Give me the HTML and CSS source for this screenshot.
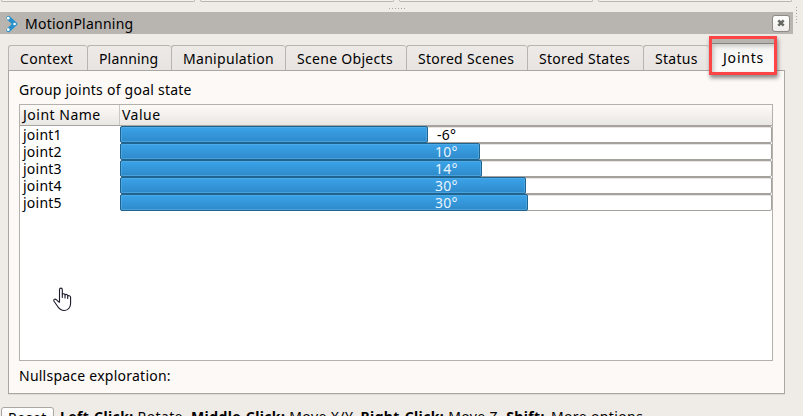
FILE: index.html
```html
<!DOCTYPE html>
<html lang="en">
<head>
<meta charset="utf-8">
<title>MotionPlanning</title>
<link rel="stylesheet" href="styles.css">
</head>
<body>
<div class="top"><i></i><i></i><i></i><i></i></div>
<div class="grip"></div>
<div class="side-grip"></div>
<header class="title">
  <svg class="logo" width="12" height="18" viewBox="0 0 12 18"><path d="M2.5 3 9 9 2.5 15" fill="none" stroke="#2790cc" stroke-width="4.4" stroke-linecap="round" stroke-linejoin="round"/><g fill="#fff"><circle cx="2.2" cy="3.2" r="1.4"/><circle cx="8.6" cy="9" r="1.3"/><circle cx="2.2" cy="14.7" r="1.4"/></g></svg>
  <span class="t-title">MotionPlanning</span>
  <button class="close" aria-label="Close"><svg width="8" height="8" viewBox="0 0 8 8"><path d="M1.3 1.3 6.7 6.7M6.7 1.3 1.3 6.7" stroke="#666662" stroke-width="2.5"/></svg></button>
</header>
<nav class="tabs">
  <div class="tab w1"><span>Context</span></div>
  <div class="tab w2"><span>Planning</span></div>
  <div class="tab w3"><span>Manipulation</span></div>
  <div class="tab w4"><span>Scene Objects</span></div>
  <div class="tab w5"><span>Stored Scenes</span></div>
  <div class="tab w6"><span>Stored States</span></div>
  <div class="tab w7"><span>Status</span></div>
  <div class="marker"><div class="active"><span>Joints</span></div></div>
</nav>
<main class="pane">
  <div class="label"><span class="t-group">Group joints of goal state</span></div>
  <section class="table">
    <div class="head"><div class="name"><span class="t-name">Joint Name</span></div><div class="value"><span class="t-value">Value</span></div></div>
    <div class="row"><div class="name"><span>joint1</span></div><div class="bar"><div class="fill" style="width:308px"></div><span class="num dark">-6°</span></div></div>
    <div class="row"><div class="name"><span>joint2</span></div><div class="bar"><div class="fill" style="width:360px"></div><span class="num">10°</span></div></div>
    <div class="row"><div class="name"><span>joint3</span></div><div class="bar"><div class="fill" style="width:362px"></div><span class="num">14°</span></div></div>
    <div class="row"><div class="name"><span>joint4</span></div><div class="bar"><div class="fill" style="width:406px"></div><span class="num">30°</span></div></div>
    <div class="row"><div class="name"><span>joint5</span></div><div class="bar"><div class="fill" style="width:408px"></div><span class="num">30°</span></div></div>
  </section>
  <div class="label bottom"><span class="t-null">Nullspace exploration:</span></div>
</main>
<footer class="help">
  <button class="reset">Reset</button>
  <p><b>Left-Click:</b> Rotate. <b>Middle-Click:</b> Move X/Y. <b>Right-Click:</b> Move Z. <b>Shift:</b> <span class="more">More options.</span></p>
</footer>
<svg class="cursor" width="20" height="26" viewBox="0 0 20 26"><path d="M6.5 15.5V2.8C6.5.6 9.3.6 9.3 2.8V10.5 7.8C9.3 6.2 12 6.4 12 8V11 8.3C12.3 6.9 14.7 7.2 14.7 8.8V11.5 9.5C15 8.2 17.6 8.5 17.6 10.2V16C17.6 19.5 15.8 23.5 11.5 23.5 7.3 23.5 5.7 21.5 4 18.5L1 14.2C0 12.5 2 11.5 3.3 12.7L6.5 15.7" fill="#fff" stroke="#1c1a2b" stroke-width="1.1" stroke-linejoin="round"/></svg>
</body>
</html>
```
FILE: styles.css
```css
* { box-sizing: border-box; }
body {
  margin: 0;
  width: 803px;
  height: 416px;
  overflow: hidden;
  position: relative;
  background: #efebe7;
  color: #000;
  font: 14px/20px "Noto Sans", "Open Sans", sans-serif;
  letter-spacing: .24px;
  white-space: nowrap;
}
.top { display: flex; gap: 5px; height: 12px; padding-left: 1px; }
.top i { width: 194px; height: 2px; border: 1px solid #b9b5b1; border-top: 0; border-radius: 0 0 3px 3px; background: #f4f2f0; }
.grip { position: absolute; left: 389px; top: 8px; width: 17px; height: 1px; background: repeating-linear-gradient(90deg, #aaa6a2 0 1px, transparent 1px 3px); }
.side-grip { position: absolute; left: 796px; top: 7px; width: 1px; height: 17px; background: repeating-linear-gradient(#aaa6a2 0 1px, transparent 1px 3px); }
.title { display: flex; align-items: center; width: 793px; height: 22px; padding: 0 3px 0 6px; background: #b8b4b0; }
.logo { margin: 2px 7px 0 0; }
.title span { padding-top: 2px; }
.close { display: flex; align-items: center; justify-content: center; width: 18px; height: 17px; margin: 0 0 0 auto; padding: 0; border: 1px solid #8e8a86; border-radius: 3px; background: linear-gradient(#fff, #efedeb); }
.tabs { display: flex; height: 36px; margin-left: 8px; padding-top: 11px; }
.tab { height: 25px; padding: 3px 0 0 11px; border: 1px solid #b9b4b0; border-width: 1px 0 0 1px; border-radius: 3px 3px 0 0; background: linear-gradient(#ece9e6, #e9e4e1); letter-spacing: .3px; }
.w1 { width: 79px; }
.w2 { width: 84px; letter-spacing: .15px; }
.w3 { width: 114px; }
.w4 { width: 121px; }
.w5 { width: 121px; }
.w6 { width: 116px; }
.w7 { width: 66px; }
.marker { position: relative; z-index: 2; width: 68px; height: 39px; margin-top: -9px; border: 3px solid #fb4547; background: #b7b3af; box-shadow: 1px 3px 4px rgba(0,0,0,.45); padding-top: 4px; }
.active { height: 29px; padding: 4px 0 0 11px; border-top: 1px solid #85827e; background: linear-gradient(#f5f5f3, #fdfcfb); box-shadow: inset 2px 2px 4px rgba(0,0,0,.2); letter-spacing: .8px; }
.pane { width: 777px; height: 324px; margin-left: 8px; padding: 9px 11px 0 10px; border: 1px solid #aaa6a2; background: #fdf9f6; box-shadow: 0 1px #dfdbd7; }
.label { height: 24px; }
.table { width: 754px; height: 257px; border: 1px solid #b4b0ac; background: #fff; }
.head { display: flex; height: 21px; border-bottom: 1px solid #a7a39f; background: linear-gradient(#fdfaf7, #e9e7e4); letter-spacing: .5px; }
.name { flex: none; width: 100px; padding-left: 2px; }
.head .name { padding-left: 3px; border-right: 1px solid #cbc7c3; }
.value { padding-left: 2px; }
.row { display: flex; height: 17px; line-height: 17px; }
.row .name { padding-left: 3px; }
.bar { display: flex; position: relative; width: 652px; height: 17px; border: 1px solid #a5a19d; border-radius: 2px; box-shadow: inset 0 1px #e7e4e1; }
.fill { height: 17px; margin: -1px 0 0 -1px; border: 1px solid #1f638f; border-radius: 2px; background: linear-gradient(#3ba3e9, #2e8aca); box-shadow: inset 0 0 0 1px rgba(92,175,230,.6); }
.num { position: absolute; left: 314px; top: -1px; color: #e8f4fc; }
.dark { left: 316px; color: #000; }
.bottom { padding-top: 5px; }
.help { display: flex; gap: 6px; height: 30px; padding: 13px 0 0 1px; letter-spacing: .38px; }
.help p { margin: 0; }
.more { margin-left: 2px; }
.reset { display: flex; justify-content: center; width: 53px; height: 25px; padding: 0; border: 1px solid #aaa6a2; border-radius: 3px; background: linear-gradient(#fff, #eeeceb); color: #000; font: inherit; letter-spacing: .5px; }
.cursor { position: absolute; left: 53px; top: 287px; }
```
